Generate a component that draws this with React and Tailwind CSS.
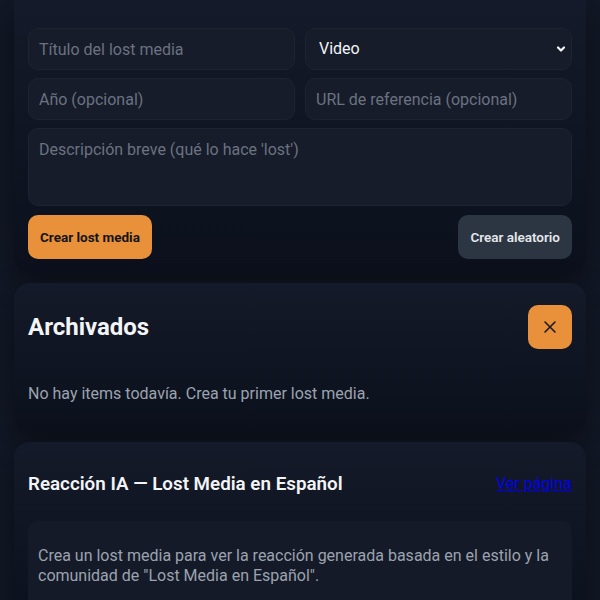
import React from "react";

function Card({ children, className = "" }) {
  return (
    <div
      className={
        "rounded-2xl bg-gradient-to-b from-[#141a29] to-[#0b101c] shadow-[0_10px_30px_rgba(0,0,0,0.45)] " +
        className
      }
    >
      {children}
    </div>
  );
}

const inputCls =
  "h-[42px] w-full rounded-[10px] border border-[#1c2333] bg-[#161c2a] px-[10px] text-[16px] text-[#e5e7eb] placeholder-[#6b7280] outline-none";

export default function App() {
  return (
    <div
      className="min-h-screen bg-[#121826] px-[14px] pt-[14px] pb-[20px] flex flex-col gap-[10px]"
      style={{ fontFamily: "Roboto, 'Noto Sans', sans-serif" }}
    >
      <Card className="p-[14px] -mt-[14px] pt-[28px] rounded-t-none">
        <div className="grid grid-cols-2 gap-x-[10px] gap-y-[8px]">
          <input className={inputCls} placeholder="Título del lost media" />
          <div className="relative">
            <select className={inputCls + " appearance-none pl-[13px] text-[#f3f4f6]"} defaultValue="Video">
              <option>Video</option>
              <option>Audio</option>
              <option>Imagen</option>
            </select>
            <svg
              className="pointer-events-none absolute right-[5px] top-1/2 -translate-y-1/2"
              width="12"
              height="12"
              viewBox="0 0 12 12"
              fill="none"
            >
              <path d="M3 4.5 L6 7.5 L9 4.5" stroke="#f3f4f6" strokeWidth="2.2" strokeLinecap="round" strokeLinejoin="round" />
            </svg>
          </div>
          <input className={inputCls} placeholder="Año (opcional)" />
          <input className={inputCls} placeholder="URL de referencia (opcional)" />
          <textarea
            className="col-span-2 h-[78px] w-full resize-none rounded-[10px] border border-[#1c2333] bg-[#161c2a] px-[10px] py-[9px] text-[16px] text-[#e5e7eb] placeholder-[#6b7280] outline-none"
            placeholder="Descripción breve (qué lo hace 'lost')"
          />
        </div>
        <div className="mt-[9px] flex items-center justify-between">
          <button className="h-[44px] rounded-[10px] bg-[#e8913a] px-[12px] text-[13.5px] font-bold text-[#141414]">
            Crear lost media
          </button>
          <button className="h-[44px] rounded-[10px] bg-[#2c3643] px-[12px] text-[13.5px] font-semibold text-[#e5e7eb]">
            Crear aleatorio
          </button>
        </div>
      </Card>

      <Card className="px-[14px] pt-[22px] pb-[26px]">
        <div className="flex items-center justify-between">
          <h2 className="text-[24px] font-bold text-[#f3f4f6]">Archivados</h2>
          <button className="flex h-[44px] w-[44px] items-center justify-center rounded-[10px] bg-[#e8913a]">
            <svg width="14" height="14" viewBox="0 0 14 14" fill="none">
              <path d="M2 2 L12 12 M12 2 L2 12" stroke="#1a1a1a" strokeWidth="1.6" strokeLinecap="round" />
            </svg>
          </button>
        </div>
        <p className="mt-[33px] text-[16px] leading-[24px] text-[#9ca3af]">
          No hay items todavía. Crea tu primer lost media.
        </p>
      </Card>

      <Card className="px-[14px] pt-[28px] pb-[20px]">
        <div className="flex items-center justify-between h-[28px]">
          <h3 className="text-[18.8px] leading-[28px] font-semibold text-[#f3f4f6]">
            Reacción IA — Lost Media en Español
          </h3>
          <a href="#" className="text-[16px] text-[#0000ee] underline">
            Ver página
          </a>
        </div>
        <div className="mt-[23px] rounded-[10px] bg-[#141a28] px-[10px] py-[25px] text-[16px] leading-[20px] text-[#9ca3af]">
          Crea un lost media para ver la reacción generada basada en el estilo y la comunidad de "Lost Media en Español".
        </div>
      </Card>
    </div>
  );
}
